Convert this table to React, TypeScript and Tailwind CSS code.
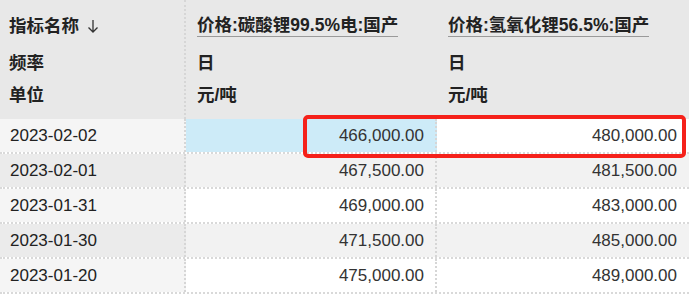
const rows = [
  { date: "2023-02-02", a: "466,000.00", b: "480,000.00" },
  { date: "2023-02-01", a: "467,500.00", b: "481,500.00" },
  { date: "2023-01-31", a: "469,000.00", b: "483,000.00" },
  { date: "2023-01-30", a: "471,500.00", b: "485,000.00" },
  { date: "2023-01-20", a: "475,000.00", b: "489,000.00" },
];

const font = { fontFamily: '"Liberation Sans", "Noto Sans CJK SC", sans-serif' };

function HeaderCell({ title, freq, unit }: { title: string; freq: string; unit: string }) {
  return (
    <div className="flex-1 border-r-2 border-dotted border-[#d6d6d6] last:border-r-0 pl-[11px] pt-[14px] pb-[12px] font-bold text-[17.5px] text-[#222]">
      <div className="h-[24px] flex items-center">
        <span className="border-b border-[#9a9a9a] leading-[21px]">{title}</span>
      </div>
      <div className="mt-[13px] leading-[24px]">{freq}</div>
      <div className="mt-[8px] leading-[24px]">{unit}</div>
    </div>
  );
}

export default function App() {
  return (
    <div className="relative w-[689px] h-[294px] overflow-hidden bg-white" style={font}>
      <div className="flex bg-[#e8e8e8]">
        <div className="w-[186px] border-r-2 border-dotted border-[#d6d6d6] pl-[9px] pt-[14px] pb-[12px] font-bold text-[17.5px] text-[#222]">
          <div className="h-[24px] flex items-center gap-[8px]">
            <span>指标名称</span>
            <svg width="12" height="14" viewBox="0 0 12 14" fill="none" stroke="#333" strokeWidth="1.3">
              <path d="M6 1v12M1.5 8.5L6 13l4.5-4.5" />
            </svg>
          </div>
          <div className="mt-[13px] leading-[24px]">频率</div>
          <div className="mt-[8px] leading-[24px]">单位</div>
        </div>
        <div className="w-[251px] flex">
          <HeaderCell title="价格:碳酸锂99.5%电:国产" freq="日" unit="元/吨" />
        </div>
        <div className="flex-1 flex">
          <HeaderCell title="价格:氢氧化锂56.5%:国产" freq="日" unit="元/吨" />
        </div>
      </div>
      {rows.map((r, i) => {
        const striped = i % 2 === 1;
        const cellBg = i === 0 ? "" : striped ? "bg-[#f2f2f2]" : "bg-white";
        return (
          <div key={r.date} className="flex h-[35px] border-b-2 border-dotted border-[#d9d9d9] text-[17px]">
            <div
              className={`w-[186px] flex items-center pl-[10px] text-[#222] border-r-2 border-dotted border-[#d6d6d6] ${
                striped ? "bg-[#ebebeb]" : "bg-[#f5f5f5]"
              }`}
            >
              {r.date}
            </div>
            <div
              className={`w-[251px] flex items-center justify-end pr-[11px] text-[#333] border-r-2 border-dotted border-[#d6d6d6] ${
                i === 0 ? "bg-[#cdebf8]" : cellBg
              }`}
            >
              {r.a}
            </div>
            <div className={`flex-1 flex items-center justify-end pr-[12px] text-[#333] ${i === 0 ? "bg-white" : cellBg}`}>
              {r.b}
            </div>
          </div>
        );
      })}
      <div className="absolute left-[303px] top-[115px] w-[383px] h-[43px] border-4 border-[#f5211a] rounded-[5px]" />
    </div>
  );
}
